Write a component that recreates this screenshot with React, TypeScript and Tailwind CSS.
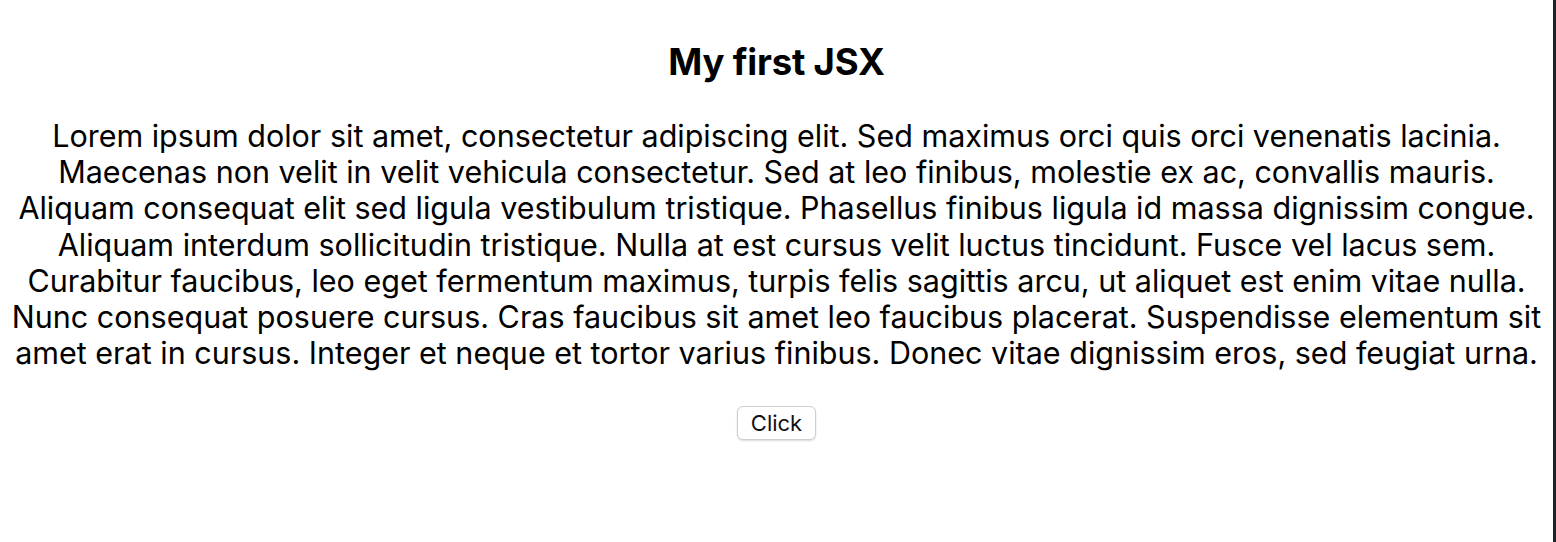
import React from 'react';

const lines = [
  'Lorem ipsum dolor sit amet, consectetur adipiscing elit. Sed maximus orci quis orci venenatis lacinia.',
  'Maecenas non velit in velit vehicula consectetur. Sed at leo finibus, molestie ex ac, convallis mauris.',
  'Aliquam consequat elit sed ligula vestibulum tristique. Phasellus finibus ligula id massa dignissim congue.',
  'Aliquam interdum sollicitudin tristique. Nulla at est cursus velit luctus tincidunt. Fusce vel lacus sem.',
  'Curabitur faucibus, leo eget fermentum maximus, turpis felis sagittis arcu, ut aliquet est enim vitae nulla.',
  'Nunc consequat posuere cursus. Cras faucibus sit amet leo faucibus placerat. Suspendisse elementum sit',
  'amet erat in cursus. Integer et neque et tortor varius finibus. Donec vitae dignissim eros, sed feugiat urna.',
];

export default function App() {
  return (
    <div className="flex h-[542px] w-full bg-white" style={{ fontFamily: 'Inter, "Noto Sans", sans-serif' }}>
      {/* Page */}
      <main className="flex-1 flex flex-col items-center text-black pt-[40px]">
        <h1 className="text-[36.5px] leading-[44px] font-bold tracking-[-0.2px]">My first JSX</h1>

        <p className="mt-[34px] text-center text-[30.5px] leading-[36.2px]">
          {lines.map((l, i) => (
            <span key={i} className="block whitespace-nowrap">
              {l}
            </span>
          ))}
        </p>

        <button className="mt-[35px] h-[34px] px-[13px] rounded-[6px] border border-[#cfcfcf] bg-white shadow-[0_1px_2px_rgba(0,0,0,0.15)] text-[22px] leading-none text-[#111]">
          Click
        </button>
      </main>

      {/* Right editor edge */}
      <div className="w-[3px] bg-[#1e2329]" />
    </div>
  );
}
